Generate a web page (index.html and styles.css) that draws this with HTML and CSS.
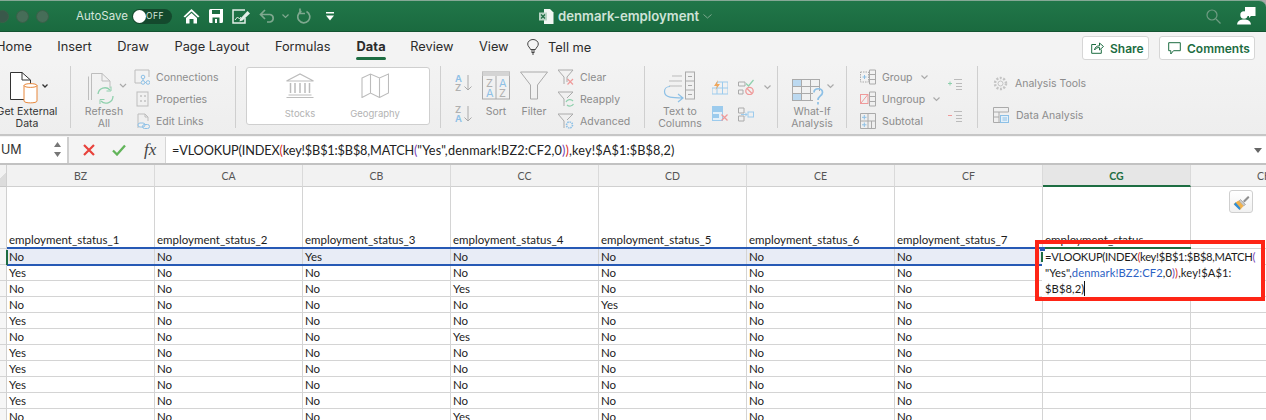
FILE: index.html
```html
<!DOCTYPE html>
<html lang="en">
<head>
<meta charset="utf-8">
<title>denmark-employment</title>
<link rel="stylesheet" href="styles.css">
</head>
<body>
<div class="app">
  <header class="titlebar">
    <div class="lights"><i class="light"></i><i class="light"></i><i class="light"></i></div>
    <span class="autosave">AutoSave</span>
    <span class="toggle"><i class="knob"></i><b>OFF</b></span>
    <svg class="qa qa-home" width="17" height="16" viewBox="0 0 17 16"><path d="M8.5 1 0.5 8.5 2 9.5 8.5 3.5 15 9.5 16.5 8.5Z" fill="#fff"/><path d="M3 10 8.5 5 14 10V15.5H10.5V11H6.5V15.5H3Z" fill="#fff"/></svg>
    <svg class="qa qa-save" width="14" height="14" viewBox="0 0 14 14"><path d="M0 1.5A1.5 1.5 0 0 1 1.5 0H14V12.5A1.5 1.5 0 0 1 12.500 14H1.500A1.500 1.500 0 0 1 0 12.500Z" fill="#fff"/><rect x="3" y="1" width="8" height="4" fill="#1d6d42"/><rect x="3.500" y="8.500" width="7" height="5.500" fill="#1d6d42"/><rect x="6" y="10" width="2" height="4" fill="#fff"/></svg>
    <svg class="qa qa-edit" width="19" height="15" viewBox="0 0 19 15"><path d="M13 1H1V14H13V9" fill="none" stroke="#e3eee7" stroke-width="1.500"/><path d="M3 11 5.500 8 7.500 10 9 8" fill="none" stroke="#e3eee7"/><path d="M8 10 15.500 2 18 4.500 10.500 11.500 7.500 12.500Z" fill="#e3eee7"/></svg>
    <svg class="qa qa-undo" width="16" height="14" viewBox="0 0 16 14"><path d="M6 1 1.500 5.500 6 10M2 5.500H11A3.800 3.800 0 0 1 11 13H8" fill="none" stroke="#7ea88f" stroke-width="1.700"/></svg>
    <svg class="qa qa-chev" width="7" height="5" viewBox="0 0 7 5"><path d="M.5.5 3.500 3.500 6.500.5" fill="none" stroke="#7ea88f" stroke-width="1.200"/></svg>
    <svg class="qa qa-redo" width="15" height="16" viewBox="0 0 15 16"><path d="M9.500 3.500A6 6 0 1 1 4.500 3.300" fill="none" stroke="#7ea88f" stroke-width="1.700"/><path d="M3 .5V5.500H8" fill="none" stroke="#7ea88f" stroke-width="1.700"/></svg>
    <svg class="qa qa-more" width="8" height="9" viewBox="0 0 8 9"><rect width="8" height="1.500" fill="#fff"/><path d="M0 3.500H8L4 8.500Z" fill="#fff"/></svg>
    <svg class="xl" width="15" height="15" viewBox="0 0 15 15"><path d="M5 0H11L14.500 3.500V15H5Z" fill="#f2f6f3"/><rect x="0" y="3.500" width="8" height="8" fill="#b8d4c4"/><path d="M2 5.500 6 9.500M6 5.500 2 9.500" stroke="#1d6d42" stroke-width="1.200"/></svg>
    <span class="doc">denmark-employment</span>
    <svg class="doc-chev" width="9" height="5" viewBox="0 0 9 5"><path d="M.5.5 4.500 4 8.500.5" fill="none" stroke="#7ea88f"/></svg>
    <svg class="search" width="15" height="15" viewBox="0 0 15 15"><circle cx="6" cy="6" r="5" fill="none" stroke="#6f9c83" stroke-width="1.200"/><path d="M10 10 14.500 14.500" stroke="#6f9c83" stroke-width="1.200"/></svg>
    <svg class="person" width="19" height="18" viewBox="0 0 19 18"><path d="M8 0H18.500V9H14L12 11V9H8Z" fill="#fff"/><circle cx="7" cy="8" r="3.700" fill="#fff"/><path d="M0 17.500C.5 13.500 3.500 12.500 7 12.500S13.500 13.500 14 17.500Z" fill="#fff"/></svg>
  </header>

  <nav class="tabs">
    <span class="tab">Home</span><span class="tab">Insert</span><span class="tab">Draw</span><span class="tab">Page Layout</span><span class="tab">Formulas</span><span class="tab active">Data</span><span class="tab">Review</span><span class="tab">View</span>
    <span class="tell">
      <svg width="12" height="16" viewBox="0 0 12 16"><path d="M3.500 10.500C3 8.500.7 7.500.7 5A5.300 4.500 0 0 1 11.300 5C11.300 7.500 9 8.500 8.500 10.500Z" fill="none" stroke="#444"/><path d="M4 12H8M4.500 13.500H7.500M5 15H7" stroke="#444"/></svg>
      Tell me
    </span>
    <span class="btn btn-share">
      <svg width="13" height="12" viewBox="0 0 13 12"><path d="M5 2.500H.7V11.300H10.300V7.500" fill="none" stroke="#1d6d42"/><path d="M3.500 8C4 5 6 3.800 8.500 3.800V1L12.500 4.500 8.500 8V5.500C6.500 5.500 5 6 3.500 8Z" fill="none" stroke="#1d6d42"/></svg>
      Share
    </span>
    <span class="btn btn-comments">
      <svg width="13" height="13" viewBox="0 0 13 13"><path d="M.7.7H12.300V8.700H5.500L2.800 12V8.700H.7Z" fill="none" stroke="#1d6d42"/></svg>
      Comments
    </span>
  </nav>

  <section class="ribbon">
    <div class="group g1">
      <div class="large strong w54">
        <svg width="54" height="34" viewBox="0 0 54 34"><path d="M10.500 1.500H22L30.500 9V28.500H10.500Z" fill="#fff" stroke="#333"/><path d="M22 1.500V9H30.500" fill="none" stroke="#333"/><path d="M24 14.500C24 12 37 12 37 14.500V30C37 32.500 24 32.500 24 30Z" fill="#fff" stroke="#e8873a"/><path d="M24 14.500C24 17 37 17 37 14.500" fill="none" stroke="#e8873a"/><path d="M42.500 13.500 45 16 47.500 13.500" fill="none" stroke="#333" stroke-width="1.300"/></svg>
        <span>Get External</span><span>Data</span>
      </div>
    </div>

    <div class="group g2">
      <div class="large w40">
        <svg width="40" height="34" viewBox="0 0 40 34"><path d="M4.500 29V5.500M7.500 29V2.500H18L26 10V17" fill="none" stroke="#bdbdbd"/><path d="M18 2.500V10H26" fill="none" stroke="#bdbdbd"/><path d="M14 23A7 7 0 0 1 26 19M29 25A7 7 0 0 1 17 30" fill="none" stroke="#8fd0ad" stroke-width="1.300"/><path d="M27 15.500V20H22.500M16 33V28.500H20.500" fill="none" stroke="#8fd0ad"/><path d="M36 13 39 16 42 13" fill="none" stroke="#aaa" stroke-width="1.200"/></svg>
        <span>Refresh</span><span>All</span>
      </div>
      <div class="list">
        <div class="item"><svg width="16" height="16" viewBox="0 0 16 16"><path d="M15 8V1H1V14H7" fill="none" stroke="#bdbdbd"/><circle cx="9" cy="8" r="1.800" fill="none" stroke="#8dc0e6"/><circle cx="9" cy="13.500" r="1.800" fill="none" stroke="#8dc0e6"/><circle cx="14" cy="13.500" r="1.800" fill="none" stroke="#8dc0e6"/><path d="M9 10V12M11 13.500H12" stroke="#8dc0e6"/></svg>Connections</div>
        <div class="item"><svg width="16" height="16" viewBox="0 0 16 16"><rect x="3" y="1" width="11" height="14" fill="none" stroke="#bdbdbd"/><path d="M6 5H8M6 10H8M10 5H12M10 10H12" stroke="#aaa"/></svg>Properties</div>
        <div class="item"><svg width="16" height="16" viewBox="0 0 16 16"><path d="M4 15V1H11L14 4V8M11 1V4H14" fill="none" stroke="#bdbdbd"/><rect x="4" y="10" width="7" height="4" rx="2" fill="#f1f1f1" stroke="#8dc0e6"/><rect x="8.500" y="11.500" width="7" height="4" rx="2" fill="none" stroke="#8dc0e6"/></svg>Edit Links</div>
      </div>
    </div>

    <div class="group g3">
      <div class="gallery">
        <div class="gal gal-s">
          <svg width="28" height="25" viewBox="0 0 28 25"><path d="M.5 8 14 1 27.500 8ZM.5 24.500H27.500M2.500 22H25.500" fill="none" stroke="#bcbcbc" stroke-width="1.200"/><path d="M4.500 10V20M9 10V20M14 10V20M19 10V20M23.500 10V20" stroke="#bcbcbc" stroke-width="1.500"/></svg>
          <span>Stocks</span>
        </div>
        <div class="gal gal-g">
          <svg width="28" height="25" viewBox="0 0 28 25"><path d="M1 5 9.500 1 18.500 5 27.500 1V20L18.500 24.500 9.500 20 1 24.500ZM9.500 1V20M18.500 5V24.500" fill="none" stroke="#bcbcbc" stroke-width="1.100"/></svg>
          <span>Geography</span>
        </div>
      </div>
    </div>

    <div class="group g4">
      <div class="sorts">
        <svg width="18" height="18" viewBox="0 0 18 18"><text x="0" y="8" class="az blue">A</text><text x="0" y="17" class="az">Z</text><path d="M13 1V16M9.500 12.500 13 16 16.500 12.500" fill="none" stroke="#aaa"/></svg>
        <svg width="18" height="18" viewBox="0 0 18 18"><text x="0" y="8" class="az">Z</text><text x="0" y="17" class="az blue">A</text><path d="M13 1V16M9.500 12.500 13 16 16.500 12.500" fill="none" stroke="#aaa"/></svg>
      </div>
      <div class="large w28">
        <svg width="28" height="34" viewBox="0 0 28 34"><rect x=".5" y="1" width="27" height="27" fill="none" stroke="#aaa"/><rect x=".5" y="1" width="27" height="4" fill="#d4d4d4"/><path d="M14 5V28" stroke="#aaa"/><text x="4" y="16" class="azb">Z</text><text x="4" y="26" class="azb blue">A</text><text x="17" y="16" class="azb blue">A</text><text x="17" y="26" class="azb">Z</text></svg>
        <span>Sort</span>
      </div>
      <div class="large w28 filter">
        <svg width="28" height="34" viewBox="0 0 28 34"><path d="M.5 1H27.500L17.500 14V28H10.500V14Z" fill="none" stroke="#aaa"/></svg>
        <span>Filter</span>
      </div>
      <div class="list">
        <div class="item"><svg width="16" height="16" viewBox="0 0 16 16"><path d="M0 1H15L9 8V13M0 1 6 8V15" fill="none" stroke="#aaa"/><path d="M9.500 10 15 15.500M15 10 9.500 15.500" stroke="#ef9a9a" stroke-width="1.200"/></svg>Clear</div>
        <div class="item"><svg width="16" height="16" viewBox="0 0 16 16"><path d="M0 1H15L9 7M0 1 6 8V15" fill="none" stroke="#aaa"/><path d="M8 11A4 3.500 0 0 1 15 10M15.500 13A4 3.500 0 0 1 9 14" fill="none" stroke="#8fd0ad" stroke-width="1.200"/></svg>Reapply</div>
        <div class="item"><svg width="16" height="16" viewBox="0 0 16 16"><path d="M0 1H15L9 7M0 1 6 8V15" fill="none" stroke="#aaa"/><circle cx="11.500" cy="12" r="3" fill="none" stroke="#8dc0e6" stroke-width="1.600" stroke-dasharray="1.500 .8"/></svg>Advanced</div>
      </div>
    </div>

    <div class="group g5">
      <div class="large w50">
        <svg width="50" height="34" viewBox="0 0 50 34"><path d="M14 10H27M14 15H27M17 5H27" stroke="#bbb"/><path d="M28 27C18 27 9.500 27 9.500 20.500 9.500 17.500 12 15.500 15 15.500M23 23 28 27 23 31" fill="none" stroke="#8dc0e6" stroke-width="1.200"/><rect x="30.500" y="1" width="9" height="27" fill="#f1f1f1" stroke="#aaa"/><path d="M30.500 10H39.500M30.500 19H39.500M33 5.500H37M33 14.500H37M33 23.500H37" stroke="#aaa"/></svg>
        <span>Text to</span><span>Columns</span>
      </div>
      <div class="tools">
        <svg width="16" height="16" viewBox="0 0 16 16"><path d="M5 3H16V15H0V9H5ZM5 9H16M10.500 3V15M5 9V15" fill="none" stroke="#9ccbed"/><path d="M6 1 2 7H5L3.500 11 8 5H5Z" fill="#f0a65a"/></svg>
        <svg width="16" height="16" viewBox="0 0 16 16"><rect x="0" y="0" width="11" height="5" fill="#9ccbed"/><rect x=".5" y="5.500" width="10" height="9" fill="#e4f0f9" stroke="#9ccbed"/><rect x="0" y="8" width="7" height="4" fill="#9ccbed"/><path d="M9.500 8.500 15.500 14.500M15.500 8.500 9.500 14.500" stroke="#ef9a9a" stroke-width="1.300"/></svg>
      </div>
      <div class="tools">
        <svg width="16" height="16" viewBox="0 0 16 16"><path d="M.5 3H7V7H.5ZM.5 11H5V15H.5Z" fill="none" stroke="#aaa"/><path d="M8 4.500 10.500 7 15.500 1" fill="none" stroke="#8fd0ad" stroke-width="1.200"/><circle cx="11.500" cy="12" r="3.700" fill="none" stroke="#ef9a9a" stroke-width="1.300"/><path d="M9 9.500 14 14.500" stroke="#ef9a9a" stroke-width="1.300"/></svg>
        <svg width="16" height="16" viewBox="0 0 16 16"><path d="M.5 2H6V7H.5ZM.5 10H6V15H.5Z" fill="none" stroke="#aaa"/><rect x="10" y="6" width="5.500" height="5" fill="none" stroke="#9ccbed"/><path d="M3 8.500H9M7 6.500 9 8.500 7 10.500" fill="none" stroke="#9ccbed"/></svg>
      </div>
      <svg class="chev c5" width="7" height="5" viewBox="0 0 7 5"><path d="M.5.500 3.500 3.500 6.500.5" fill="none" stroke="#aaa" stroke-width="1.200"/></svg>
    </div>

    <div class="group g6">
      <div class="large w50">
        <svg width="50" height="34" viewBox="0 0 50 34"><rect x="5.500" y="8.500" width="27" height="21" fill="none" stroke="#aaa"/><rect x="6" y="9" width="9" height="6.500" fill="#bcd9f0"/><rect x="6" y="22" width="9" height="7" fill="#bcd9f0"/><path d="M14.500 8.500V29.500M23.500 8.500V29.500M5.500 15.500H32.500M5.500 22.500H32.500" stroke="#aaa"/><rect x="26" y="20" width="11" height="14" fill="#f1f1f1"/><path d="M27 21.500C27 16.500 35.500 16.500 35.500 21.500 35.500 25 31 25 31 29M31 31V33.500" fill="none" stroke="#8dc0e6" stroke-width="1.700"/><path d="M40.500 13.500 43.500 16.500 46.500 13.500" fill="none" stroke="#aaa" stroke-width="1.200"/></svg>
        <span>What-If</span><span>Analysis</span>
      </div>
    </div>

    <div class="group g7">
      <div class="list">
        <div class="item"><svg width="16" height="16" viewBox="0 0 16 16"><rect x=".5" y="3" width="8" height="10" fill="none" stroke="#aaa" stroke-dasharray="1.500 1"/><path d="M2.500 8H6.500M4.500 6V10" stroke="#8dc0e6"/><path d="M9.500 1H15.500V15H9.500ZM9.500 5.500H15.500M9.500 10.500H15.500" fill="none" stroke="#aaa"/></svg>Group<svg class="chev" width="7" height="5" viewBox="0 0 7 5"><path d="M.5.500 3.500 3.500 6.500.5" fill="none" stroke="#aaa" stroke-width="1.200"/></svg></div>
        <div class="item"><svg width="16" height="16" viewBox="0 0 16 16"><rect x=".5" y="3.500" width="7.500" height="9" fill="none" stroke="#ef9a9a"/><path d="M1 12 7.500 4" stroke="#ef9a9a"/><path d="M9.500 1H15.500V15H9.500ZM9.500 5.500H15.500M9.500 10.500H15.500" fill="none" stroke="#aaa"/></svg>Ungroup<svg class="chev" width="7" height="5" viewBox="0 0 7 5"><path d="M.5.500 3.500 3.500 6.500.5" fill="none" stroke="#aaa" stroke-width="1.200"/></svg></div>
        <div class="item"><svg width="16" height="16" viewBox="0 0 16 16"><path d="M.5.500H15.500V15.500H.5ZM8 .5V15.500M.5 8H15.500M11.500 8V15.500" fill="none" stroke="#aaa"/><path d="M2 4.300H6.500M4.300 2V6.500M2 11.800H6.500M4.300 9.500V14" stroke="#8dc0e6"/></svg>Subtotal</div>
      </div>
      <div class="outline">
        <svg width="15" height="11" viewBox="0 0 15 11"><path d="M0 4.500H4M2 2.500V6.500" stroke="#8fd0ad"/><path d="M6 .5H14M8 4.500H14M8 7.500H14M8 10.500H14" stroke="#bbb"/></svg>
        <svg width="15" height="11" viewBox="0 0 15 11"><path d="M0 4.500H4" stroke="#ef9a9a"/><path d="M6 .5H14M8 4.500H14M8 7.500H14M8 10.500H14" stroke="#bbb"/></svg>
      </div>
    </div>

    <div class="group g8">
      <div class="item wide"><svg width="15" height="15" viewBox="0 0 15 15"><circle cx="7.500" cy="7.500" r="2.500" fill="none" stroke="#c4c4c4"/><circle cx="7.500" cy="7.500" r="5.500" fill="none" stroke="#c4c4c4" stroke-width="2.500" stroke-dasharray="2 1.500"/></svg>Analysis Tools</div>
      <div class="item wide"><svg width="16" height="16" viewBox="0 0 16 16"><path d="M.5.500H15.500V5H.5ZM.5 5V15.500H9M.5 10H6M6 5V15.500" fill="none" stroke="#aaa"/><rect x="7.500" y="8.500" width="8" height="7" fill="#e4f0f9" stroke="#8dc0e6"/><path d="M9.500 11H14M9.500 13H14" stroke="#8dc0e6"/></svg>Data Analysis</div>
    </div>
  </section>

  <section class="formula">
    <div class="namebox"><span>UM</span>
      <svg width="7" height="15" viewBox="0 0 7 15"><path d="M3.500 0 7 5H0ZM0 10H7L3.500 15Z" fill="#777"/></svg>
    </div>
    <div class="fbtns">
      <svg class="f-x" width="12" height="12" viewBox="0 0 12 12"><path d="M1 1 11 11M11 1 1 11" stroke="#e8423c" stroke-width="2.200"/></svg>
      <svg class="f-ok" width="14" height="12" viewBox="0 0 14 12"><path d="M1 6.500 5 10.500 13 1.500" fill="none" stroke="#62b45a" stroke-width="2.300"/></svg>
      <span class="fx">fx</span>
    </div>
    <div class="finput"><span class="f-tight">=VLOOKUP(INDEX<span class="red">(</span>key!$B$1:$B$8,MATCH<span class="purple">(</span></span><span class="f-loose">"Yes",denmark!BZ2:CF2,0<span class="purple">)</span><span class="red">)</span>,key!$A$1:$B$8,2)</span></div>
    <svg class="fdrop" width="8" height="5" viewBox="0 0 8 5"><path d="M0 0H8L4 5Z" fill="#666"/></svg>
  </section>

  <section class="sheet">
    <div class="grid">
      <div class="corner"></div>
      <div class="ch">BZ</div><div class="ch">CA</div><div class="ch">CB</div><div class="ch">CC</div><div class="ch">CD</div><div class="ch">CE</div><div class="ch">CF</div><div class="ch sel">CG</div><div class="ch">CH</div>

      <div class="rh"></div>
      <div class="c tall">employment_status_1</div><div class="c tall">employment_status_2</div><div class="c tall">employment_status_3</div><div class="c tall">employment_status_4</div><div class="c tall">employment_status_5</div><div class="c tall">employment_status_6</div><div class="c tall">employment_status_7</div><div class="c tall">employment_status</div><div class="c tall"></div>

      <div class="rh"></div>
      <div class="c cur">No</div><div class="c cur">No</div><div class="c cur">Yes</div><div class="c cur">No</div><div class="c cur">No</div><div class="c cur">No</div><div class="c cur">No</div><div class="c"></div><div class="c"></div>

      <div class="rh"></div><div class="c">Yes</div><div class="c">No</div><div class="c">No</div><div class="c">No</div><div class="c">No</div><div class="c">No</div><div class="c">No</div><div class="c"></div><div class="c"></div>
      <div class="rh"></div><div class="c">No</div><div class="c">No</div><div class="c">No</div><div class="c">Yes</div><div class="c">No</div><div class="c">No</div><div class="c">No</div><div class="c"></div><div class="c"></div>
      <div class="rh"></div><div class="c">No</div><div class="c">No</div><div class="c">No</div><div class="c">No</div><div class="c">Yes</div><div class="c">No</div><div class="c">No</div><div class="c"></div><div class="c"></div>
      <div class="rh"></div><div class="c">Yes</div><div class="c">No</div><div class="c">No</div><div class="c">No</div><div class="c">No</div><div class="c">No</div><div class="c">No</div><div class="c"></div><div class="c"></div>
      <div class="rh"></div><div class="c">No</div><div class="c">No</div><div class="c">No</div><div class="c">Yes</div><div class="c">No</div><div class="c">No</div><div class="c">No</div><div class="c"></div><div class="c"></div>
      <div class="rh"></div><div class="c">Yes</div><div class="c">No</div><div class="c">No</div><div class="c">No</div><div class="c">No</div><div class="c">No</div><div class="c">No</div><div class="c"></div><div class="c"></div>
      <div class="rh"></div><div class="c">Yes</div><div class="c">No</div><div class="c">No</div><div class="c">No</div><div class="c">No</div><div class="c">No</div><div class="c">No</div><div class="c"></div><div class="c"></div>
      <div class="rh"></div><div class="c">Yes</div><div class="c">No</div><div class="c">No</div><div class="c">No</div><div class="c">No</div><div class="c">No</div><div class="c">No</div><div class="c"></div><div class="c"></div>
      <div class="rh"></div><div class="c">Yes</div><div class="c">No</div><div class="c">No</div><div class="c">No</div><div class="c">No</div><div class="c">No</div><div class="c">No</div><div class="c"></div><div class="c"></div>
      <div class="rh"></div><div class="c">No</div><div class="c">No</div><div class="c">No</div><div class="c">Yes</div><div class="c">No</div><div class="c">No</div><div class="c">No</div><div class="c"></div><div class="c"></div>
    </div>

    <i class="rowband"></i>
    <i class="marker"></i>

    <button class="paint" type="button" aria-label="Format painter">
      <svg width="17" height="16" viewBox="0 0 17 16"><path d="M10 6 14.500 1.500C15.500.5 17 2 16 3L11.500 7.500Z" fill="#8f8f8f"/><path d="M7.500 4.500 12.500 9.500 10.500 11 6 6Z" fill="#c9c9c9" stroke="#8f8f8f" stroke-width=".6"/><path d="M5.500 5.500 10.500 11 7 15 .5 9Z" fill="#f2b14a"/><path d="M2.500 7.300 7.500 13 6.500 15 1 9.500Z" fill="#2f8fd8"/></svg>
    </button>

    <div class="editor">
      <i class="edit-line"></i>
      <div class="edit-text"><span class="e-tight">=VLOOKUP(INDEX<span class="red">(</span>key!$B$1:$B$8,MATCH<span class="purple">(</span></span><br><span class="e-loose">"Yes",<span class="blue-ref">denmark!BZ2:CF2</span>,0<span class="purple">)</span><span class="red">)</span>,key!$A$1:</span><br><span class="e-loose">$B$8,2)</span><i class="caret"></i></div>
      <i class="edit-dot"></i>
      <i class="edit-handle"></i>
    </div>
  </section>
</div>
</body>
</html>
```

FILE: styles.css
```css
* { box-sizing: border-box; }
html, body { margin: 0; padding: 0; height: 100%; overflow: hidden; background: #fff; }
body { font-family: Inter, "Liberation Sans", sans-serif; }
.app { width: 1266px; height: 420px; display: flex; flex-direction: column; overflow: hidden; background: #a8a8a8; }

/* title bar */
.titlebar { height: 32px; flex: none; display: flex; align-items: center; position: relative; border-top-right-radius: 7px;
  background: linear-gradient(#217649, #1a6a3f); border-top: 1px solid #86a896; border-bottom: 1px solid #145432; }
.lights { display: flex; gap: 7px; margin-left: -4px; width: 74px; flex: none; }
.light { width: 13px; height: 13px; border-radius: 50%; background: #466d58; border: 1px solid #3b6049; }
.light:first-child { background: #39584a; }
.autosave { font-size: 11.500px; color: #d6e6dc; width: 56px; margin-left: 6px; flex: none; white-space: nowrap; }
.toggle { width: 40px; height: 15px; border-radius: 8px; background: #14492d; position: relative; flex: none; display: flex; align-items: center; justify-content: flex-end; padding-right: 8px; }
.toggle b { font-size: 8.500px; font-weight: 400; color: #d6e6dc; letter-spacing: .5px; }
.knob { position: absolute; left: 1px; top: 1px; width: 13px; height: 13px; border-radius: 50%; background: #fff; }
.qa { flex: none; display: block; }
.qa-home { margin-left: 11px; }
.qa-save { margin-left: 9px; }
.qa-edit { margin-left: 9px; }
.qa-undo { margin-left: 8px; }
.qa-chev { margin-left: 7px; }
.qa-redo { margin-left: 8px; }
.qa-more { margin-left: 14px; }
.xl { margin-left: 205px; flex: none; }
.doc { font-size: 13.200px; font-weight: 600; color: #cfe3d7; margin-left: 4px; white-space: nowrap; }
.doc-chev { margin-left: 4px; flex: none; }
.search { margin-left: auto; flex: none; }
.person { margin-left: 16px; margin-right: 10px; flex: none; }

/* tabs */
.tabs { height: 30px; flex: none; display: flex; align-items: center; background: #f3f3f3; font-size: 12.800px; color: #2b2b2b; }
.tab { margin-right: 25.500px; position: relative; line-height: 30px; height: 30px; white-space: nowrap; }
.tab:first-child { margin-left: -4px; }
.tab.active { font-weight: 700; letter-spacing: .1px; margin-left: .5px; margin-right: 24.500px; }
.tab.active::after { content: ""; position: absolute; left: 0; right: 0; bottom: 2px; height: 3px; border-radius: 2px; background: #1d6d42; }
.tell { display: flex; align-items: center; gap: 9px; margin-left: -7px; height: 30px; white-space: nowrap; }
.btn { height: 24px; margin-top: 2px; background: #fff; border: 1px solid #d6d6d6; border-radius: 3px; display: flex; align-items: center; gap: 6px; color: #1d6d42; font-size: 12px; font-weight: 600; padding-left: 8px; flex: none; }
.btn-share { width: 67px; margin-left: auto; }
.btn-comments { width: 96px; margin-left: 10px; margin-right: 11px; }

/* ribbon */
.ribbon { height: 74px; flex: none; display: flex; background: linear-gradient(#f3f3f3, #eeeeee); border-bottom: 2px solid #c6c6c6; font-size: 10.500px; color: #8c8c8c; padding-top: 4px; }
.group { height: 62px; flex: none; display: flex; border-right: 1px solid #cfcfcf; position: relative; }
.g1 { width: 71px; }
.g2 { width: 165px; padding-left: 13px; }
.g3 { width: 205px; padding-left: 10px; padding-top: 1px; }
.g4 { width: 204px; padding-left: 14px; }
.g5 { width: 133px; padding-left: 10px; }
.g6 { width: 69px; padding-left: 9px; }
.g7 { width: 131px; padding-left: 13px; }
.g8 { flex: 1; border-right: 0; padding-left: 15px; flex-direction: column; }
.large { display: flex; flex-direction: column; align-items: center; line-height: 12px; white-space: nowrap; padding-top: 5px; flex: none; }
.large svg { display: block; height: 34px; flex: none; overflow: visible; margin-bottom: 1px; }
.w54 { width: 54px; }
.w40 { width: 40px; }
.w28 { width: 28px; }
.w50 { width: 50px; }
.strong { color: #333; }
.filter { margin-left: 10px; }
.list { display: flex; flex-direction: column; margin-left: 10px; flex: none; }
.g7 .list { margin-left: 0; }
.item { height: 22px; flex: none; display: flex; align-items: center; gap: 6px; white-space: nowrap; }
.item svg { flex: none; }
.item svg.chev { margin-left: 2px; }
.wide { height: 32px; gap: 7px; position: relative; top: 1px; }

/* gallery */
.gallery { width: 184px; height: 58px; background: #fff; border: 1px solid #cfcfcf; border-radius: 3px; display: flex; }
.gal { display: flex; flex-direction: column; align-items: center; padding-top: 5px; font-size: 9.500px; color: #b3b3b3; width: 48px; flex: none; }
.gal span { margin-top: 10px; line-height: 12px; white-space: nowrap; }
.gal-s { margin-left: 29px; }
.gal-g { margin-left: 27px; }

/* sort icons */
.sorts { display: flex; flex-direction: column; gap: 13px; padding-top: 8px; width: 27px; flex: none; }
.az { font: 600 9.500px Inter, sans-serif; fill: #b0b0b0; }
.azb { font: 400 11px Inter, sans-serif; fill: #b0b0b0; }
.az.blue, .azb.blue { fill: #8dc0e6; }
.tools { display: flex; flex-direction: column; gap: 11px; padding-top: 13px; flex: none; }
.g5 .tools { margin-left: 7px; }
.g5 .tools + .tools { margin-left: 10px; }
.chev.c5 { margin: 19px 0 0 10px; flex: none; }
.outline { display: flex; flex-direction: column; gap: 21px; margin-left: auto; margin-right: 14px; padding-top: 13px; flex: none; }

/* formula bar */
.formula { height: 29px; flex: none; display: flex; align-items: center; background: #f4f4f4; border-bottom: 2px solid #c2c2c2; position: relative; }
.namebox { width: 69px; height: 26px; background: #fff; border-right: 2px solid #cfcfcf; display: flex; align-items: center; justify-content: space-between; padding: 0 6px 0 1px; font-size: 12.500px; color: #333; flex: none; }
.fbtns { width: 96px; height: 26px; display: flex; align-items: center; flex: none; position: relative; background: #f4f4f4; }
.f-x { margin-left: 14px; flex: none; }
.f-ok { margin-left: 17px; flex: none; }
.fx { margin-left: 18px; font: italic 17px "Liberation Serif", serif; color: #444; }
.finput { flex: 1; height: 26px; background: #fff; border-left: 1px solid #d6d6d6; padding-left: 6px; font: 12.700px/26px Lato, sans-serif; color: #222; white-space: nowrap; }
.f-tight { letter-spacing: -.14px; }
.f-loose { letter-spacing: .14px; }
.fdrop { position: absolute; right: 4px; top: 12px; }
.red { color: #d8302c; }
.purple { color: #7a3fb5; }
.blue-ref { color: #2c62c4; }

/* sheet */
.sheet { flex: 1; position: relative; overflow: hidden; background: #fff; }
.grid { display: grid; grid-template-columns: 7px repeat(9, 148px); grid-template-rows: 22px 62px repeat(12, 16px); font: 11.500px/16px Lato, sans-serif; color: #1c1c1c; }
.corner { background: linear-gradient(135deg, #f2f2f2 50%, #dcdcdc 50%); border-right: 1px solid #d0d0d0; border-bottom: 1px solid #c8c8c8; }
.ch { background: #f2f2f2; border-right: 1px solid #dadada; border-bottom: 1px solid #d0d0d0; color: #555; font-size: 10.500px; line-height: 23px; text-align: center; white-space: nowrap; }
.ch.sel { background: #e6e6e6; border-bottom: 2px solid #1d6d42; color: #1d6d42; font-weight: 700; }
.rh { background: #f6f6f6; border-right: 1px solid #d0d0d0; border-bottom: 1px solid #d4d4d4; }
.c { border-right: 1px solid #d4d4d4; border-bottom: 1px solid #d4d4d4; padding-left: 2px; white-space: nowrap; overflow: hidden; }
.c.tall { display: flex; align-items: flex-end; }
.c.cur { background: #e8ecf6; }
.rowband { position: absolute; left: 7px; top: 82px; width: 1035px; height: 19px; border-top: 2px solid #2659b5; border-bottom: 2px solid #2659b5; pointer-events: none; }
.marker { position: absolute; left: 6px; top: 85px; width: 2px; height: 15px; background: #1d6d42; }
.paint { position: absolute; left: 1229px; top: 25px; width: 24px; height: 23px; background: linear-gradient(#fff, #f1f1f1); border: 1px solid #cfcfcf; border-radius: 3px; padding: 2px 0 0 3px; }
.paint svg { display: block; }
.editor { position: absolute; left: 1035px; top: 75px; width: 230px; height: 61px; border: 4px solid #fe2516; pointer-events: none; }
.edit-line { position: absolute; left: 3px; top: 3px; width: 149px; height: 2px; background: #1d6d42; }
.edit-text { position: absolute; left: 3px; top: 5px; right: 0; bottom: 0; padding-left: 3px; background: #fff; font: 11.200px/16px Lato, sans-serif; color: #1c1c1c; white-space: nowrap; }
.e-tight { letter-spacing: -.3px; }
.e-loose { letter-spacing: .1px; }
.edit-dot { position: absolute; left: 1px; top: 3px; width: 5px; height: 4px; background: #2659b5; }
.edit-handle { position: absolute; left: 2px; top: 8px; width: 2px; height: 10px; background: #1d6d42; }
.caret { display: inline-block; width: 1px; height: 15px; background: #111; vertical-align: -3px; }
```
